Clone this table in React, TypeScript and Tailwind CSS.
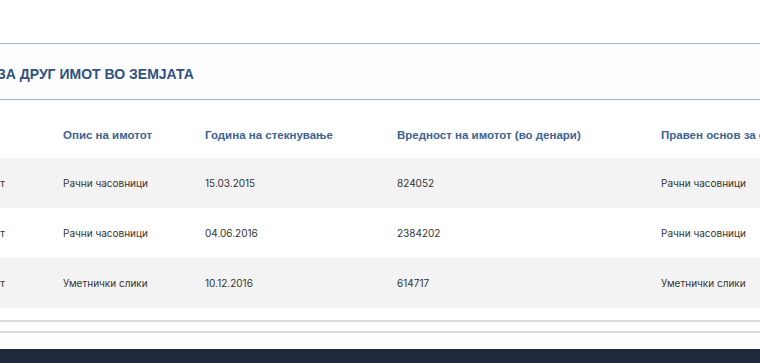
import React from "react";

interface IRow {
    kind: string;
    desc: string;
    date: string;
    value: string;
    basis: string;
}

const rows: IRow[] = [
    { kind: "Подвижен имот", desc: "Рачни часовници", date: "15.03.2015", value: "824052", basis: "Рачни часовници" },
    { kind: "Подвижен имот", desc: "Рачни часовници", date: "04.06.2016", value: "2384202", basis: "Рачни часовници" },
    { kind: "Подвижен имот", desc: "Уметнички слики", date: "10.12.2016", value: "614717", basis: "Уметнички слики" },
];

const headFont = { fontFamily: "'Liberation Sans', Arial, sans-serif" };
const bodyFont = { fontFamily: "Inter, 'Noto Sans', sans-serif" };

const App = () => (
    <div className="w-[760px] h-[363px] overflow-hidden bg-white flex flex-col">
        <div className="h-[43px] shrink-0"></div>
        <div className="h-px bg-[#a4b3c7] shrink-0"></div>
        <div className="h-[55px] shrink-0 flex items-center pt-[5px] bg-[#fdfdfd]">
            <div className="-ml-[3px] whitespace-nowrap text-[14px] font-bold text-[#2f5282]" style={headFont}>
                ЗА ДРУГ ИМОТ ВО ЗЕМЈАТА
            </div>
        </div>
        <div className="h-px bg-[#a4b3c7] shrink-0"></div>

        <div className="flex shrink-0 pt-[28px] pb-[16px] text-[11.5px] leading-[14px] font-bold text-[#3d6393] whitespace-nowrap" style={headFont}>
            <div className="w-[63px] shrink-0"></div>
            <div className="w-[142px] shrink-0">Опис на имотот</div>
            <div className="w-[192px] shrink-0">Година на стекнување</div>
            <div className="w-[264px] shrink-0">Вредност на имотот (во денари)</div>
            <div className="shrink-0">Правен основ за стекнување</div>
        </div>

        {rows.map((r, i) => (
            <div key={i} className={`flex items-center shrink-0 h-[50px] text-[10px] text-[#333] whitespace-nowrap ${i % 2 === 0 ? "bg-[#f3f3f3]" : "bg-white"}`} style={bodyFont}>
                <div className="w-[63px] shrink-0 flex justify-end pr-[58px]">{r.kind}</div>
                <div className="w-[142px] shrink-0">{r.desc}</div>
                <div className="w-[192px] shrink-0">{r.date}</div>
                <div className="w-[264px] shrink-0">{r.value}</div>
                <div className="shrink-0">{r.basis}</div>
            </div>
        ))}

        <div className="h-[12px] shrink-0"></div>
        <div className="h-[2px] bg-[#dadada] shrink-0"></div>
        <div className="h-[9px] shrink-0"></div>
        <div className="h-[2px] bg-[#dadada] shrink-0"></div>
        <div className="h-[16px] shrink-0"></div>
        <div className="flex-1 bg-[#1f293b]"></div>
    </div>
);

export default App;
